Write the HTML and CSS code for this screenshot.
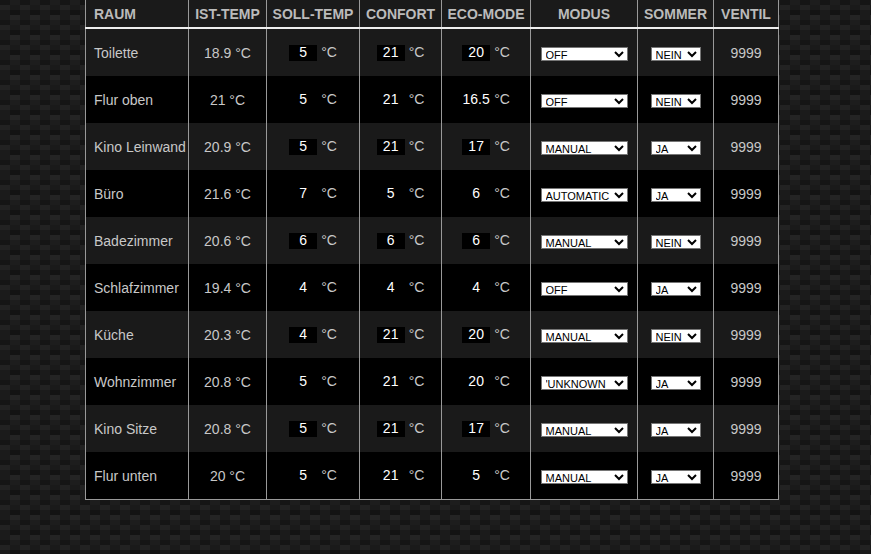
FILE: index.html
```html
<!DOCTYPE html>
<html lang="de">
<head>
<meta charset="utf-8">
<title>Heizung</title>
<link rel="stylesheet" href="styles.css">
</head>
<body>
<table class="rooms">
<colgroup><col class="c1"><col class="c2"><col class="c3"><col class="c4"><col class="c5"><col class="c6"><col class="c7"><col class="c8"></colgroup>
<thead><tr><th class="left">RAUM</th><th>IST-TEMP</th><th>SOLL-TEMP</th><th>CONFORT</th><th>ECO-MODE</th><th>MODUS</th><th>SOMMER</th><th>VENTIL</th></tr></thead>
<tbody>
<tr><td class="left">Toilette</td><td>18.9 °C</td><td><span class="val">5</span>°C</td><td><span class="val">21</span>°C</td><td><span class="val">20</span>°C</td><td><select class="modus"><option>OFF</option></select></td><td><select class="sommer"><option>NEIN</option></select></td><td>9999</td></tr>
<tr><td class="left">Flur oben</td><td>21 °C</td><td><span class="val">5</span>°C</td><td><span class="val">21</span>°C</td><td><span class="val">16.5</span>°C</td><td><select class="modus"><option>OFF</option></select></td><td><select class="sommer"><option>NEIN</option></select></td><td>9999</td></tr>
<tr><td class="left">Kino Leinwand</td><td>20.9 °C</td><td><span class="val">5</span>°C</td><td><span class="val">21</span>°C</td><td><span class="val">17</span>°C</td><td><select class="modus"><option>MANUAL</option></select></td><td><select class="sommer"><option>JA</option></select></td><td>9999</td></tr>
<tr><td class="left">Büro</td><td>21.6 °C</td><td><span class="val">7</span>°C</td><td><span class="val">5</span>°C</td><td><span class="val">6</span>°C</td><td><select class="modus"><option>AUTOMATIC</option></select></td><td><select class="sommer"><option>JA</option></select></td><td>9999</td></tr>
<tr><td class="left">Badezimmer</td><td>20.6 °C</td><td><span class="val">6</span>°C</td><td><span class="val">6</span>°C</td><td><span class="val">6</span>°C</td><td><select class="modus"><option>MANUAL</option></select></td><td><select class="sommer"><option>NEIN</option></select></td><td>9999</td></tr>
<tr><td class="left">Schlafzimmer</td><td>19.4 °C</td><td><span class="val">4</span>°C</td><td><span class="val">4</span>°C</td><td><span class="val">4</span>°C</td><td><select class="modus"><option>OFF</option></select></td><td><select class="sommer"><option>JA</option></select></td><td>9999</td></tr>
<tr><td class="left">Küche</td><td>20.3 °C</td><td><span class="val">4</span>°C</td><td><span class="val">21</span>°C</td><td><span class="val">20</span>°C</td><td><select class="modus"><option>MANUAL</option></select></td><td><select class="sommer"><option>NEIN</option></select></td><td>9999</td></tr>
<tr><td class="left">Wohnzimmer</td><td>20.8 °C</td><td><span class="val">5</span>°C</td><td><span class="val">21</span>°C</td><td><span class="val">20</span>°C</td><td><select class="modus"><option>'UNKNOWN</option></select></td><td><select class="sommer"><option>JA</option></select></td><td>9999</td></tr>
<tr><td class="left">Kino Sitze</td><td>20.8 °C</td><td><span class="val">5</span>°C</td><td><span class="val">21</span>°C</td><td><span class="val">17</span>°C</td><td><select class="modus"><option>MANUAL</option></select></td><td><select class="sommer"><option>JA</option></select></td><td>9999</td></tr>
<tr><td class="left">Flur unten</td><td>20 °C</td><td><span class="val">5</span>°C</td><td><span class="val">21</span>°C</td><td><span class="val">5</span>°C</td><td><select class="modus"><option>MANUAL</option></select></td><td><select class="sommer"><option>JA</option></select></td><td>9999</td></tr>
</tbody>
</table>
</body>
</html>
```
FILE: styles.css
```css
html, body { margin: 0; height: 100%; overflow: hidden; }
body {
  padding-left: 85px;
  box-sizing: border-box;
  font: 14px "Liberation Sans", Arial, sans-serif;
  color: #c8c8c8;
  background-color: #131313;
  background-image:
    linear-gradient(27deg, #151515 5px, transparent 5px),
    linear-gradient(207deg, #151515 5px, transparent 5px),
    linear-gradient(27deg, #222 5px, transparent 5px),
    linear-gradient(207deg, #222 5px, transparent 5px),
    linear-gradient(90deg, #1b1b1b 10px, transparent 10px),
    linear-gradient(#1d1d1d 25%, #1a1a1a 25%, #1a1a1a 50%, transparent 50%, transparent 75%, #242424 75%, #242424);
  background-position: 0 5px, 10px 0, 0 10px, 10px 5px, 0 0, 0 0;
  background-size: 20px 20px;
}
.rooms { width: 693px; table-layout: fixed; border-collapse: collapse; border: 1px solid #999; border-top: 0; }
.c1 { width: 103px; } .c2 { width: 78px; } .c3 { width: 93px; } .c4 { width: 82px; }
.c5 { width: 89px; } .c6 { width: 107px; } .c7 { width: 76px; } .c8 { width: 65px; }
th, td { border-left: 1px solid #999; border-right: 1px solid #999; text-align: center; padding: 0; }
th { height: 27px; background: #1a1a1a; font-weight: bold; color: #bbb; border-bottom: 2px solid #eee; }
td { height: 47px; }
tbody tr:nth-child(odd) td { background: #1a1a1a; }
tbody tr:nth-child(even) td { background: #000; }
th.left, td.left { text-align: left; padding-left: 8px; }
.val { display: inline-block; width: 28px; height: 16px; line-height: 15px; margin-right: 4px; background: #000; color: #fff; font-weight: normal; }
select { height: 14px; font: 11px "Liberation Sans", Arial, sans-serif; background: #fff; color: #000; border: 1px solid #767676; padding: 0; vertical-align: middle; }
.modus { width: 87px; }
.sommer { width: 50px; }
```
